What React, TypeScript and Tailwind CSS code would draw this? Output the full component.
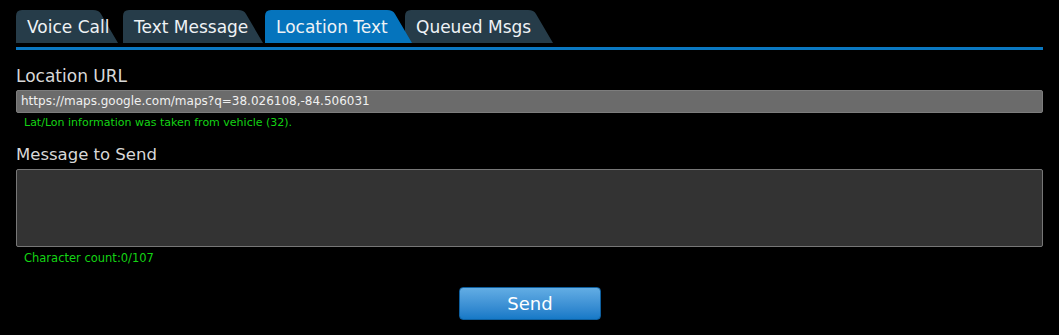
import React from "react";

type Tab = { label: string; w: number; ml: number; active?: boolean; z: number };

const tabs: Tab[] = [
  { label: "Voice Call", w: 102, ml: 0, z: 1 },
  { label: "Text Message", w: 140, ml: 5, z: 2 },
  { label: "Location Text", w: 147, ml: 2, active: true, z: 5 },
  { label: "Queued Msgs", w: 148, ml: -7, z: 3 },
];

function TabShape({ w, color }: { w: number; color: string }) {
  const h = 33;
  const s = 20;
  const d = `M0,${h} L0,6 Q0,0 6,0 L${w - s - 5},0 Q${w - s + 1},0 ${w - s + 3},4 L${w},${h} Z`;
  return (
    <svg className="absolute inset-0" width={w} height={h} viewBox={`0 0 ${w} ${h}`}>
      <path d={d} fill={color} />
    </svg>
  );
}

export default function App() {
  return (
    <div className="w-[1059px] h-[335px] bg-black px-4 pt-[10px] overflow-hidden" style={{ fontFamily: '"DejaVu Sans", Verdana, sans-serif' }}>
      <div className="flex h-[33px]">
        {tabs.map((t) => (
          <div
            key={t.label}
            className="relative h-[33px] shrink-0"
            style={{ width: t.w, marginLeft: t.ml, zIndex: t.z }}
          >
            <TabShape w={t.w} color={t.active ? "#0574bd" : "#263c49"} />
            <span className="relative block pl-[11px] pt-[1px] leading-[33px] text-[17px] text-[#eef2f5] whitespace-nowrap">
              {t.label}
            </span>
          </div>
        ))}
      </div>
      <div className="mt-[4px] h-[3px] bg-[#0a78c2]" />
      <div>
        <div className="mt-[16px] text-[17px] leading-[20px] text-[#d8d8d8]">Location URL</div>
        <div className="mt-[4px] h-[23px] bg-[#6b6b6b] border border-[#7d7d7d] rounded-[2px] pl-[4px] text-[12px] leading-[21px] text-[#f0f0f0] whitespace-nowrap">
          https://maps.google.com/maps?q=38.026108,-84.506031
        </div>
        <div className="mt-[3px] pl-[8px] text-[11px] leading-[14px] text-[#14d414]">
          Lat/Lon information was taken from vehicle (32).
        </div>
        <div className="mt-[15px] text-[16.5px] leading-[20px] text-[#d8d8d8]">Message to Send</div>
        <div className="mt-[4px] h-[78px] bg-[#333333] border border-[#777777] rounded-[2px]" />
        <div className="mt-[4px] pl-[8px] text-[11.5px] leading-[14px] text-[#14d414]">Character count:0/107</div>
        <div className="mt-[22px] flex justify-center">
          <button className="w-[142px] h-[33px] ml-[1px] rounded-[4px] border border-[#0e5f9e] bg-gradient-to-b from-[#62ade4] to-[#1579c7] text-white text-[18px] leading-[31px]">
            Send
          </button>
        </div>
      </div>
    </div>
  );
}
